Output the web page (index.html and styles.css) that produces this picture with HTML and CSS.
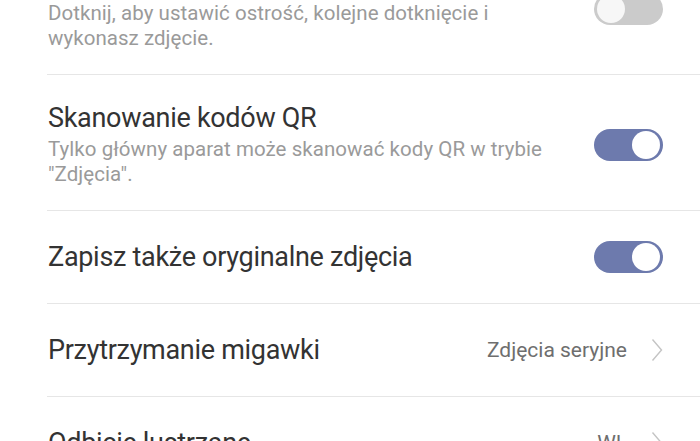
FILE: index.html
```html
<!DOCTYPE html>
<html lang="pl">
<head>
<meta charset="utf-8">
<title>Ustawienia aparatu</title>
<link rel="stylesheet" href="styles.css">
</head>
<body>
<div class="list">
  <div class="row row-sub">
    <div class="text">
      <div class="title">Zdjęcia dotykiem</div>
      <div class="sub">Dotknij, aby ustawić ostrość, kolejne dotknięcie i wykonasz zdjęcie.</div>
    </div>
    <span class="switch"><span class="knob"></span></span>
  </div>
  <div class="row row-sub">
    <div class="text">
      <div class="title">Skanowanie kodów QR</div>
      <div class="sub">Tylko główny aparat może skanować kody QR w trybie "Zdjęcia".</div>
    </div>
    <span class="switch on"><span class="knob"></span></span>
  </div>
  <div class="row">
    <div class="text">
      <div class="title">Zapisz także oryginalne zdjęcia</div>
    </div>
    <span class="switch on"><span class="knob"></span></span>
  </div>
  <div class="row">
    <div class="text">
      <div class="title">Przytrzymanie migawki</div>
    </div>
    <span class="value">Zdjęcia seryjne</span>
    <svg class="chev" viewBox="0 0 12 24" width="12" height="24"><path d="M1.5 1.5 L10.5 12 L1.5 22.5" fill="none" stroke="#c4c4c4" stroke-width="1.4"/></svg>
  </div>
  <div class="row">
    <div class="text">
      <div class="title">Odbicie lustrzane</div>
    </div>
    <span class="value">Wł.</span>
    <svg class="chev" viewBox="0 0 12 24" width="12" height="24"><path d="M1.5 1.5 L10.5 12 L1.5 22.5" fill="none" stroke="#c4c4c4" stroke-width="1.4"/></svg>
  </div>
</div>
</body>
</html>
```

FILE: styles.css
```css
html, body {
  margin: 0;
  padding: 0;
  background: #ffffff;
  overflow: hidden;
}
body {
  font-family: Roboto, "Noto Sans", sans-serif;
  width: 700px;
  height: 441px;
}
.list {
  margin-top: -61px;
  margin-left: 47px;
}
.row {
  display: flex;
  align-items: center;
  min-height: 93px;
  box-sizing: border-box;
  padding: 0 37px 0 1px;
  border-bottom: 1px solid #e6e6e6;
}
.row-sub {
  padding-top: 27px;
  padding-bottom: 23px;
}
.text {
  flex: 1;
  min-width: 0;
}
.title {
  font-size: 27px;
  line-height: 32px;
  color: #333333;
  letter-spacing: -0.3px;
}
.row-sub .title {
  margin-bottom: 3px;
}
.sub {
  font-size: 20.5px;
  line-height: 25px;
  color: #9a9a9a;
  letter-spacing: 0.05px;
  max-width: 515px;
}
.switch {
  flex: none;
  width: 69px;
  height: 32px;
  border-radius: 16px;
  background: #cbcbcb;
  position: relative;
  margin-left: 30px;
}
.switch .knob {
  position: absolute;
  top: 2px;
  left: 3px;
  width: 28px;
  height: 28px;
  border-radius: 50%;
  background: #f7f7f7;
  box-sizing: border-box;
}
.switch.on {
  background: #6d7aad;
}
.switch.on .knob {
  left: auto;
  right: 3px;
  background: #ffffff;
}
.value {
  font-size: 21px;
  color: #6e6e6e;
  margin-right: 24px;
}
.chev {
  flex: none;
}
```
